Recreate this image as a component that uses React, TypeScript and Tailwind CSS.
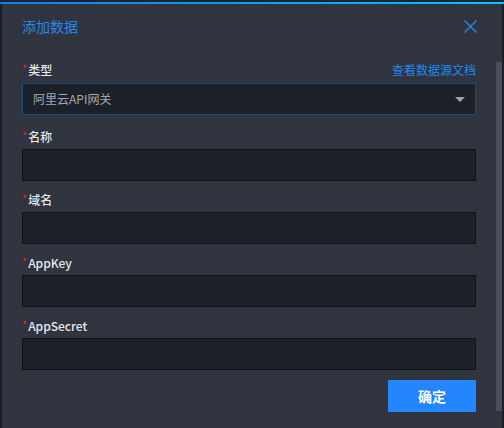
const fields = [
  { label: '名称' },
  { label: '域名' },
  { label: 'AppKey' },
  { label: 'AppSecret' },
];

function Label({ text, className = '' }: { text: string; className?: string }) {
  return (
    <div className={`flex h-[18px] items-start leading-[18px] ${className}`}>
      <span className="mt-[1px] mr-[1px] text-[11px] leading-[12px] text-[#e0262e]">*</span>
      <span className="text-[12px] font-medium text-[#e6e8eb]">{text}</span>
    </div>
  );
}

export default function App() {
  return (
    <div
      className="flex h-[428px] w-[504px] flex-col bg-[#1a1e26]"
      style={{ fontFamily: '"Noto Sans CJK SC", "Noto Sans", sans-serif' }}
    >
      <div className="h-[2px] bg-[#1b2230]" />
      <div className="h-[2px] bg-gradient-to-r from-[#1a78ee] to-[#00c6ff]" />
      <div className="flex flex-1">
        <div className="w-[2px] bg-[#1a1e26]" />
        <div className="flex flex-1 bg-[#2f343e]">
          {/* form */}
          <div className="flex flex-1 flex-col">
            <div className="flex h-[44px] items-center justify-between pl-5 pr-4">
              <span className="text-[14px] leading-[20px] text-[#2a86f2]">添加数据</span>
              <svg width="13" height="13" viewBox="0 0 13 13" className="mr-[3px]">
                <path d="M0.5 0.5 L12.5 12.5 M12.5 0.5 L0.5 12.5" stroke="#2a80e8" strokeWidth="1.5" />
              </svg>
            </div>

            <div className="flex flex-col px-5">
              <div className="mt-[13px] flex items-start justify-between">
                <Label text="类型" />
                <span className="text-[12px] leading-[18px] text-[#2287f5]">查看数据源文档</span>
              </div>
              <div className="mt-[4px] flex h-[32px] items-center justify-between border border-[#1f4a7c] bg-[#1c2029] pl-[10px] pr-[10px]">
                <span className="text-[12px] text-[#a3a9b1]">阿里云API网关</span>
                <svg width="10" height="5" viewBox="0 0 10 5">
                  <polygon points="0,0 10,0 5,5" fill="#a0a5ad" />
                </svg>
              </div>

              {fields.map((f, i) => (
                <div key={f.label} className="flex flex-col">
                  <Label text={f.label} className={i === 0 ? 'mt-[13px]' : 'mt-[10px]'} />
                  <div className="mt-[3px] h-[32px] border border-[#0e1116] bg-[#1c2029]" />
                </div>
              ))}

              <div className="mt-[10px] flex justify-end">
                <button className="h-[32px] w-[88px] bg-[#2486ff] text-[14px] font-bold text-white">
                  确定
                </button>
              </div>
            </div>
          </div>

          {/* scrollbar */}
          <div className="flex w-[6px] flex-col">
            <div className="h-[58px]" />
            <div className="h-[349px] bg-[#4a505b]" />
          </div>
        </div>
        <div className="w-[2px] bg-[#1a1e26]" />
      </div>
    </div>
  );
}
